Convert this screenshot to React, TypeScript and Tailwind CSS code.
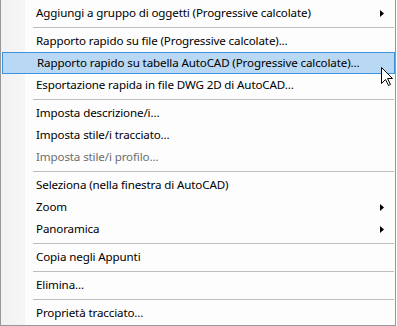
import React from 'react';

type Entry =
  | { kind: 'item'; label: string; sub?: boolean; disabled?: boolean; active?: boolean }
  | { kind: 'sep' };

const entries: Entry[] = [
  { kind: 'item', label: 'Aggiungi a gruppo di oggetti (Progressive calcolate)', sub: true },
  { kind: 'sep' },
  { kind: 'item', label: 'Rapporto rapido su file (Progressive calcolate)...' },
  { kind: 'item', label: 'Rapporto rapido su tabella AutoCAD (Progressive calcolate)...', active: true },
  { kind: 'item', label: 'Esportazione rapida in file DWG 2D di AutoCAD...' },
  { kind: 'sep' },
  { kind: 'item', label: 'Imposta descrizione/i...' },
  { kind: 'item', label: 'Imposta stile/i tracciato...' },
  { kind: 'item', label: 'Imposta stile/i profilo...', disabled: true },
  { kind: 'sep' },
  { kind: 'item', label: 'Seleziona (nella finestra di AutoCAD)' },
  { kind: 'item', label: 'Zoom', sub: true },
  { kind: 'item', label: 'Panoramica', sub: true },
  { kind: 'sep' },
  { kind: 'item', label: 'Copia negli Appunti' },
  { kind: 'sep' },
  { kind: 'item', label: 'Elimina...' },
  { kind: 'sep' },
  { kind: 'item', label: 'Proprietà tracciato...' },
];

const SubArrow = () => (
  <svg width="4" height="7" viewBox="0 0 4 7" className="shrink-0">
    <path d="M0 0 L4 3.5 L0 7 Z" fill="#000" />
  </svg>
);

const Cursor = () => (
  <svg width="13" height="20" viewBox="0 0 13 20" className="absolute left-[381px] top-[67px]">
    <path
      d="M0.5 0.5 L0.5 16.5 L4.5 12.5 L7.5 18.5 L9.5 17.5 L6.5 11.5 L11.5 11.5 Z"
      fill="#fff"
      stroke="#000"
      strokeWidth="1"
      strokeLinejoin="miter"
    />
  </svg>
);

export default function App() {
  return (
    <div className="relative w-[397px] h-[326px] bg-white overflow-hidden text-[11.6px] tracking-[-0.13px] font-['Segoe_UI','Noto_Sans',sans-serif]">
      <div className="w-[396px] h-[326px] border-l border-r border-b border-[#979797] pt-[2px] bg-[linear-gradient(to_right,#f1f1f1_0px,#f6f6f6_24px,#fdfdfd_24px)]">
        {entries.map((e, i) =>
          e.kind === 'sep' ? (
            <div key={i} className="h-[6px] pt-[3px] pl-[32px] pr-[1px]">
              <div className="h-px bg-[#bdbdbd]" />
            </div>
          ) : (
            <div
              key={i}
              className={
                'h-[22px] ml-px flex items-center pl-[34px] pr-[11px] ' +
                (e.active ? 'bg-[#b9d8f3] border border-[#3e92dc] pl-[33px] pr-[10px]' : '')
              }
            >
              <span className={'flex-1 whitespace-nowrap ' + (e.disabled ? 'text-[#6d6d6d]' : 'text-black')}>
                {e.label}
              </span>
              {e.sub && <SubArrow />}
            </div>
          )
        )}
      </div>
      <Cursor />
    </div>
  );
}
